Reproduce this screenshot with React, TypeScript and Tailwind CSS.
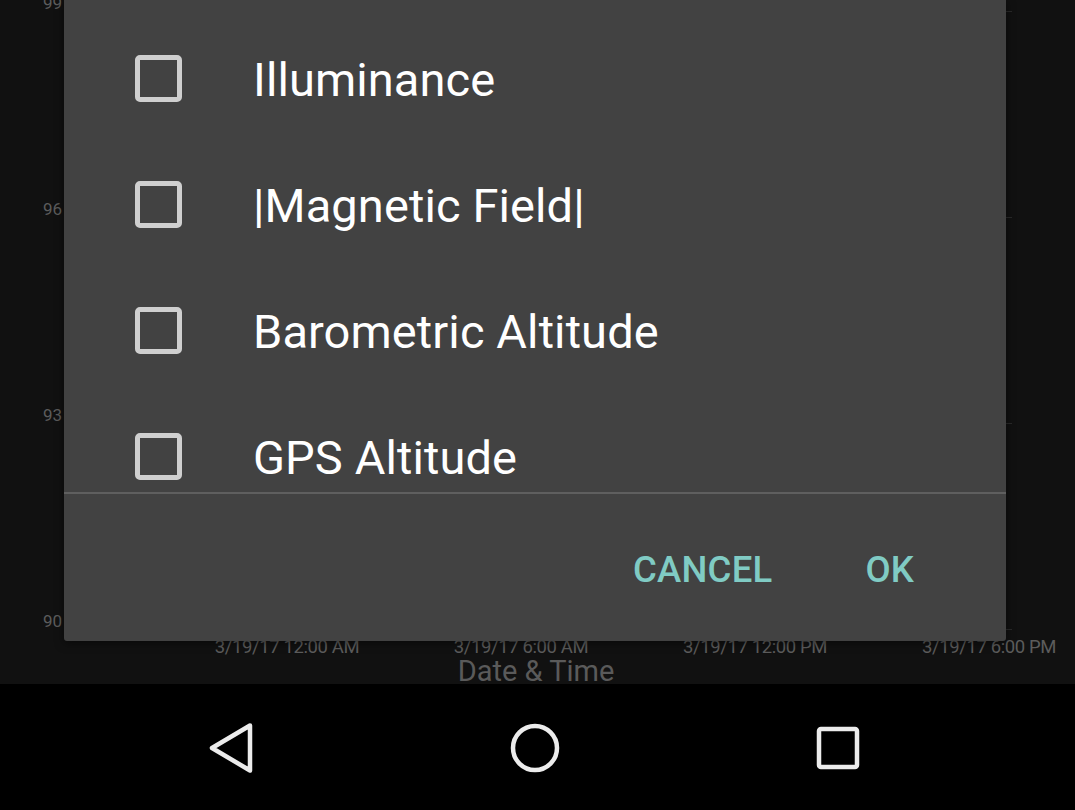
import { useState } from "react";

const sensors = ["Illuminance", "|Magnetic Field|", "Barometric Altitude", "GPS Altitude"];
const yLabels = ["99", "96", "93", "90"];
const xLabels = ["3/19/17 12:00 AM", "3/19/17 6:00 AM", "3/19/17 12:00 PM", "3/19/17 6:00 PM"];

export default function App() {
  const [checked, setChecked] = useState<boolean[]>([false, false, false, false]);

  return (
    <div
      className="w-[1075px] h-[810px] flex flex-col bg-black overflow-hidden"
      style={{ fontFamily: "Roboto, 'Liberation Sans', sans-serif" }}
    >
      {/* Chart behind the dialog */}
      <div className="relative h-[684px] shrink-0 bg-[#111111] flex flex-col overflow-hidden">
        <div className="flex h-[636px] shrink-0">
          {/* y axis */}
          <div className="w-[63px] flex flex-col gap-[186px] -mt-[7px] items-end pr-px">
            {yLabels.map((l) => (
              <span key={l} className="h-[20px] leading-[20px] text-[17px] text-[#5c5c5c]">{l}</span>
            ))}
          </div>
          {/* grid ticks */}
          <div className="flex-1 flex flex-col items-end gap-[205px] pt-[11px] pr-[63px]">
            {yLabels.map((l) => (
              <div key={l} className="w-[12px] h-px bg-[#2a2a2a]" />
            ))}
          </div>
        </div>
        {/* x axis */}
        <div className="grid grid-cols-[repeat(4,234px)] pl-[170px] shrink-0">
          {xLabels.map((l) => (
            <span key={l} className="text-center whitespace-nowrap text-[18.5px] leading-[22px] tracking-[-0.4px] text-[#5c5c5c]">{l}</span>
          ))}
        </div>
        <div className="text-center text-[29px] leading-[25px] mt-px text-[#5a5a5a] pr-[3px] shrink-0">Date &amp; Time</div>

        {/* Dialog */}
        <div className="absolute left-[64px] top-0 w-[942px] h-[641px] bg-[#424242] rounded-b-[3px] flex flex-col shadow-[0_2px_10px_rgba(0,0,0,0.5)]">
          <div className="h-[492px] overflow-hidden pt-[15px]">
            {sensors.map((s, i) => (
              <div
                key={s}
                className="h-[126px] flex items-center cursor-pointer"
                onClick={() => setChecked(checked.map((c, j) => (j === i ? !c : c)))}
              >
                <div className="ml-[71px] w-[47px] h-[47px] rounded-[5px] border-[5px] border-[#cfcfcf] flex items-center justify-center">
                  {checked[i] && <div className="w-[25px] h-[25px] bg-[#80cbc4]" />}
                </div>
                <span className="ml-[71px] text-[47px] leading-[56px] mt-[3px] text-white tracking-[0.1px]">{s}</span>
              </div>
            ))}
          </div>
          <div className="h-[2px] bg-[#5f5f5f]" />
          <div className="flex-1 flex items-center justify-end pr-[92px] gap-[93px] pt-[5px]">
            <button className="text-[36.5px] font-medium text-[#80cbc4] tracking-[0.2px]">CANCEL</button>
            <button className="text-[36.5px] font-medium text-[#80cbc4] tracking-[0.2px]">OK</button>
          </div>
        </div>
      </div>

      {/* Navigation bar */}
      <div className="flex-1 bg-black flex items-center pt-[1px]">
        <div className="ml-[206px] w-[50px] h-[50px] flex items-center justify-center">
          <svg width="50" height="52" viewBox="0 0 50 52" fill="none">
            <path d="M44 3.5 L6 26 L44 48.5 Z" stroke="#ececec" strokeWidth="4.5" strokeLinejoin="round" />
          </svg>
        </div>
        <div className="ml-[254px] w-[50px] h-[50px] flex items-center justify-center">
          <svg width="50" height="50" viewBox="0 0 50 50" fill="none">
            <circle cx="25" cy="25" r="22" stroke="#ececec" strokeWidth="4.5" />
          </svg>
        </div>
        <div className="ml-[255px] w-[46px] h-[46px] flex items-center justify-center">
          <svg width="46" height="46" viewBox="0 0 46 46" fill="none">
            <rect x="4" y="4" width="38" height="38" rx="2" stroke="#ececec" strokeWidth="4.5" />
          </svg>
        </div>
      </div>
    </div>
  );
}
